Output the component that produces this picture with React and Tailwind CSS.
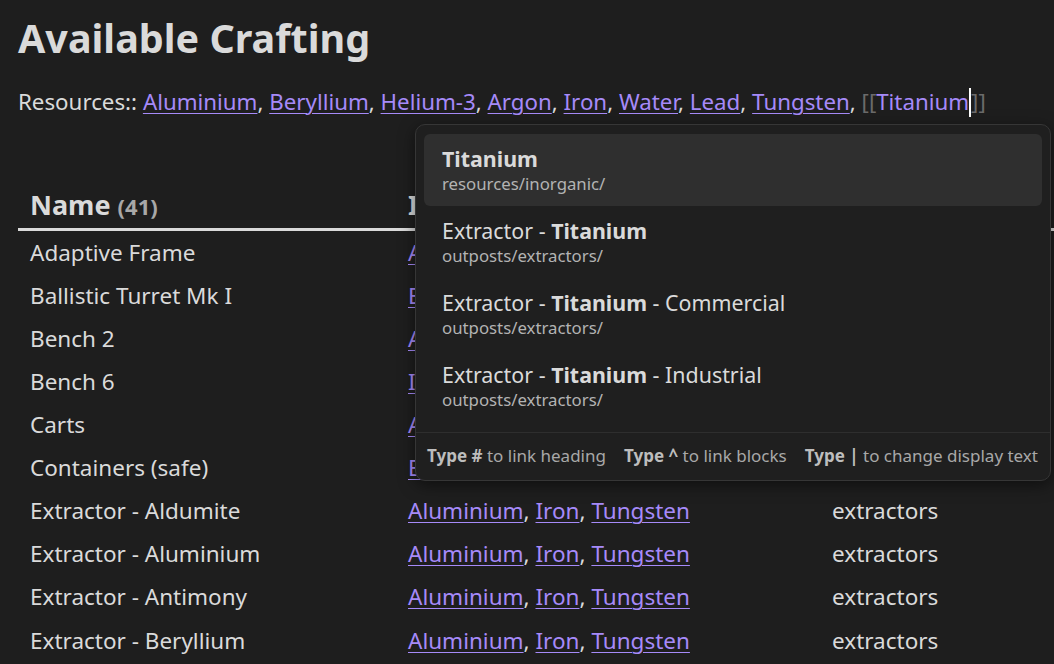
import React from "react";

const F = { fontFamily: '"Noto Sans", "Open Sans", sans-serif' };

function Link({ children }) {
  return <span className="text-[#a68af9] underline underline-offset-[3px] decoration-1">{children}</span>;
}

const rows = [
  ["Adaptive Frame", ["Aluminium", "Iron"], "frames"],
  ["Ballistic Turret Mk I", ["Beryllium", "Iron"], "turrets"],
  ["Bench 2", ["Aluminium", "Iron"], "benches"],
  ["Bench 6", ["Iron", "Lead"], "benches"],
  ["Carts", ["Aluminium", "Iron"], "carts"],
  ["Containers (safe)", ["Beryllium", "Iron"], "containers"],
  ["Extractor - Aldumite", ["Aluminium", "Iron", "Tungsten"], "extractors"],
  ["Extractor - Aluminium", ["Aluminium", "Iron", "Tungsten"], "extractors"],
  ["Extractor - Antimony", ["Aluminium", "Iron", "Tungsten"], "extractors"],
  ["Extractor - Beryllium", ["Aluminium", "Iron", "Tungsten"], "extractors"],
];

const resources = ["Aluminium", "Beryllium", "Helium-3", "Argon", "Iron", "Water", "Lead", "Tungsten"];

const items = [
  { pre: "", bold: "Titanium", post: "", path: "resources/inorganic/", sel: true },
  { pre: "Extractor - ", bold: "Titanium", post: "", path: "outposts/extractors/" },
  { pre: "Extractor - ", bold: "Titanium", post: " - Commercial", path: "outposts/extractors/" },
  { pre: "Extractor - ", bold: "Titanium", post: " - Industrial", path: "outposts/extractors/" },
];

export default function App() {
  return (
    <div className="relative w-[1054px] h-[664px] overflow-hidden bg-[#1e1e1e] text-[#dadada]" style={F}>
      <div className="flex flex-col pl-[18px]">
        <h1 className="text-[39.5px] font-bold leading-[48px] mt-[14px] text-[#dadada]">Available Crafting</h1>
        <div className="text-[22.3px] leading-[30px] mt-[25px] whitespace-nowrap">
          Resources::{" "}
          {resources.map((r) => (
            <React.Fragment key={r}>
              <Link>{r}</Link>,{" "}
            </React.Fragment>
          ))}
          <span className="text-[#6b6b6b]">[[</span>
          <span className="text-[#a68af9]">Titanium</span>
          <span className="inline-block w-[2px] h-[29px] bg-white align-middle -mt-[3px]"></span>
          <span className="text-[#6b6b6b]">]]</span>
        </div>

        <div className="mt-[66px] w-[1100px] flex flex-col">
          <div className="flex h-[48px] items-center border-b-[3px] border-[#dadada]">
            <div className="w-[390px] pl-[12px] text-[27px] font-bold whitespace-nowrap">
              Name <span className="text-[22px] text-[#a8a8a8]">(41)</span>
            </div>
            <div className="w-[424px] text-[27px] font-bold">Ingredients</div>
            <div className="text-[27px] font-bold">Category</div>
          </div>
          {rows.map((r) => (
            <div key={r[0]} className="flex h-[43.1px] items-center text-[22.5px] whitespace-nowrap">
              <div className="w-[390px] pl-[12px]">{r[0]}</div>
              <div className="w-[424px]">
                {r[1].map((x, i) => (
                  <React.Fragment key={x}>
                    <Link>{x}</Link>
                    {i < r[1].length - 1 ? ", " : ""}
                  </React.Fragment>
                ))}
              </div>
              <div>{r[2]}</div>
            </div>
          ))}
        </div>
      </div>

      <div className="absolute left-[415px] top-[124px] w-[636px] h-[357px] rounded-[10px] border border-[#363636] bg-[#1f1f1f] shadow-[0_4px_16px_rgba(0,0,0,0.5)] flex flex-col">
        <div className="flex flex-col px-[8px] pt-[9px]">
          {items.map((it, i) => (
            <div
              key={i}
              className={`h-[72px] rounded-[6px] pl-[18px] flex flex-col justify-center ${it.sel ? "bg-[#2f2f2f]" : ""}`}
            >
              <div className="text-[21.4px] leading-[28px] text-[#dadada] whitespace-nowrap">
                {it.pre}
                <span className="font-bold">{it.bold}</span>
                {it.post}
              </div>
              <div className="text-[16.8px] leading-[22px] text-[#b3b3b3]">{it.path}</div>
            </div>
          ))}
        </div>
        <div className="mt-[10px] border-t border-[#2e2e2e] flex-1 flex items-center pb-[2px] px-[11px] gap-[18px] text-[17px] text-[#a8a8a8] whitespace-nowrap">
          <span><span className="font-bold text-[#bdbdbd]">Type #</span> to link heading</span>
          <span><span className="font-bold text-[#bdbdbd]">Type ^</span> to link blocks</span>
          <span><span className="font-bold text-[#bdbdbd]">Type |</span> to change display text</span>
        </div>
      </div>
    </div>
  );
}
